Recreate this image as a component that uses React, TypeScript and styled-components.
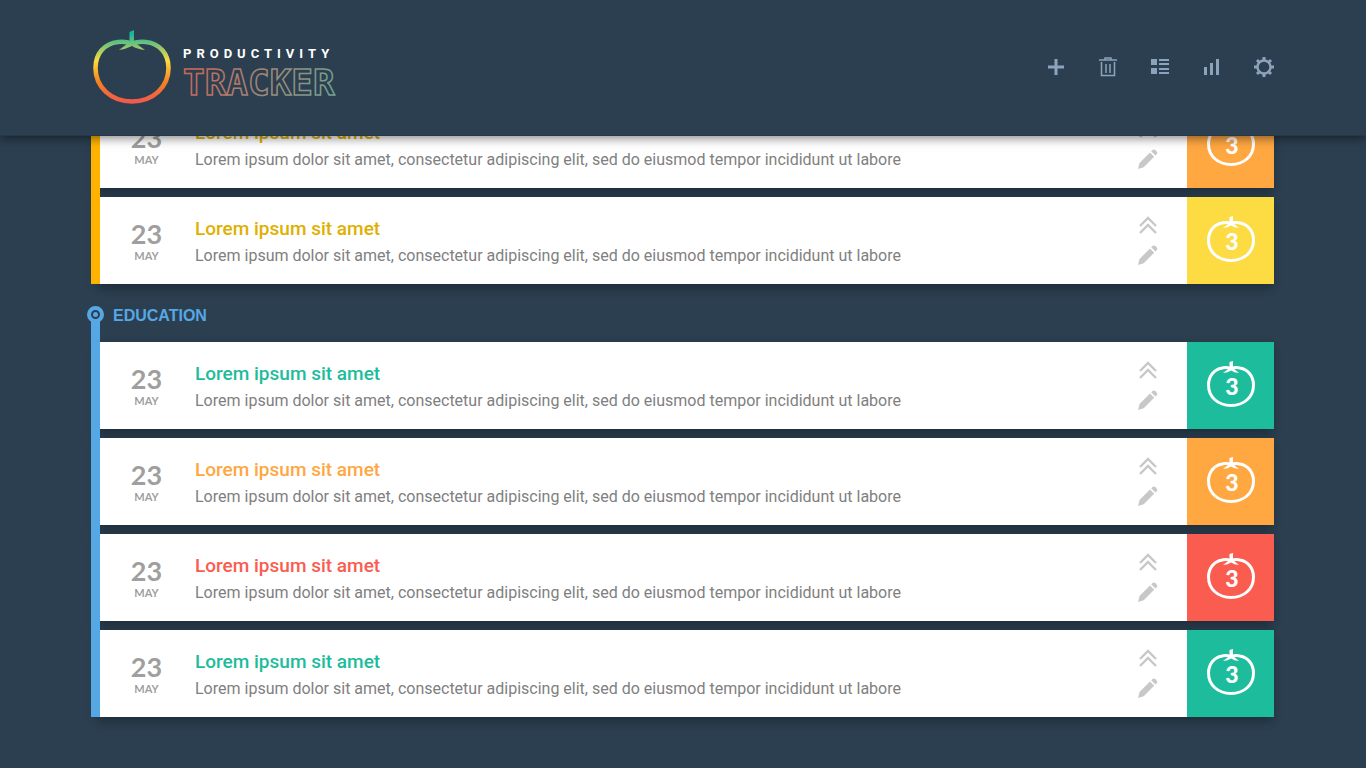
import React from "react";
import styled, { createGlobalStyle } from "styled-components";

const GlobalStyle = createGlobalStyle`
  * { box-sizing: border-box; }
  body {
    margin: 0;
    background: #2b3f50;
    font-family: Roboto, "Noto Sans", sans-serif;
  }
  h1, h2, h3, p, ul { margin: 0; padding: 0; }
`;

const Page = styled.div`
  min-height: 100vh;
  overflow: hidden;
`;

const Header = styled.header`
  position: sticky;
  top: 0;
  z-index: 2;
  display: flex;
  align-items: center;
  justify-content: space-between;
  height: 136px;
  padding: 0 91px 0 92px;
  background: #2b3f50;
  border-bottom: 1px solid #263746;
  box-shadow: 0 2px 10px rgba(0, 0, 0, 0.5);
`;

const Brand = styled.div`
  display: flex;
  align-items: center;
  gap: 11px;
`;

const BrandName = styled.h1`
  display: flex;
  font-size: 14px;
`;

const Toolbar = styled.nav`
  display: flex;
  align-items: center;
  gap: 30px;
  padding-bottom: 2px;
`;

const IconButton = styled.button`
  display: flex;
  align-items: center;
  justify-content: center;
  width: 22px;
  height: 22px;
  padding: 0;
  border: 0;
  background: none;
  color: #8ba4bb;
  cursor: pointer;
`;

const Content = styled.main`
  margin-top: -35px;
  padding: 0 92px 51px 91px;
`;

const Section = styled.section<{ $color: string }>`
  color: ${(p) => p.$color};
`;

const SectionTitle = styled.h2`
  display: flex;
  align-items: center;
  gap: 9px;
  height: 58px;
  padding: 6px 0 0;
  margin-left: -4px;
  font: bold 16px/20px "Liberation Sans", sans-serif;
`;

const Marker = styled.svg`
  display: block;
  align-self: flex-end;
  width: 17px;
  height: 36px;
`;

const SectionBody = styled.div`
  display: flex;
`;

const Rail = styled.div`
  position: relative;
  z-index: 1;
  width: 9px;
  background: currentColor;
`;

const TaskList = styled.ul`
  flex: 1;
  display: flex;
  flex-direction: column;
  gap: 9px;
  list-style: none;
`;

const Card = styled.li`
  display: flex;
  align-items: stretch;
  height: 87px;
  background: #fff;
  box-shadow: -4px 4px 10px rgba(0, 0, 0, 0.16), 0 4px 8px rgba(0, 0, 0, 0.16);
`;

const DateBlock = styled.time`
  width: 91px;
  padding: 21px 0 0 2px;
  text-align: center;
  color: #9f9f9f;
  font-family: Lato, "Noto Sans", sans-serif;
  font-weight: 700;
`;

const Day = styled.div`
  font-size: 27px;
  line-height: 32px;
`;

const Month = styled.div`
  font-size: 11px;
  line-height: 12px;
`;

const TaskText = styled.div`
  flex: 1;
  padding: 20px 0 0 4px;
`;

const TaskTitle = styled.h3<{ $color: string }>`
  color: ${(p) => p.$color};
  font-size: 19px;
  font-weight: 500;
  line-height: 24px;
`;

const TaskNote = styled.p`
  padding-top: 4px;
  color: #808080;
  font-size: 16px;
  line-height: 22px;
`;

const Actions = styled.div`
  display: flex;
  flex-direction: column;
  align-items: center;
  gap: 8px;
  width: 79px;
  padding-top: 17px;
`;

const ActionButton = styled(IconButton)`
  color: #c8c8c8;
`;

const Count = styled.div<{ $color: string }>`
  display: flex;
  align-items: center;
  justify-content: center;
  width: 87px;
  padding-bottom: 2px;
  background: ${(p) => p.$color};
`;

function BrandTomato() {
  return (
    <svg width="80" height="76" viewBox="0 0 80 76" aria-hidden="true">
      <defs>
        <linearGradient id="tomato" x1="0" y1="0" x2="0" y2="76" gradientUnits="userSpaceOnUse">
          <stop offset="0.05" stopColor="#18b59c" />
          <stop offset="0.2" stopColor="#7cc576" />
          <stop offset="0.4" stopColor="#fbdc3f" />
          <stop offset="0.68" stopColor="#f58220" />
          <stop offset="0.95" stopColor="#f1594c" />
        </linearGradient>
      </defs>
      <path
        d="M40 13.500C36 12 31 11.500 26 12C12 13.500 3.500 24 3.500 38C3.500 57 19 71.500 40 71.500C61 71.500 76.500 57 76.500 38C76.500 24 68 13.500 54 12C49 11.500 44 12 40 13.500Z"
        fill="none"
        stroke="url(#tomato)"
        strokeWidth="4.600"
      />
      <path
        d="M37.500 2L42 0V12L53 20Q45 19 40 16Q34 19 27 20L37.500 12Z"
        fill="url(#tomato)"
      />
    </svg>
  );
}

const Wordmark = styled.svg`
  display: block;
  overflow: visible;
`;

function BrandText() {
  return (
    <Wordmark width="154" height="54" viewBox="0 0 154 54">
      <defs>
        <linearGradient id="tracker" x1="0" y1="0" x2="154" y2="54" gradientUnits="userSpaceOnUse">
          <stop offset="0.1" stopColor="#c9675b" />
          <stop offset="0.55" stopColor="#a08877" />
          <stop offset="1" stopColor="#6fa392" />
        </linearGradient>
      </defs>
      <text x="0" y="17" fill="#fff" fontFamily="Roboto" fontWeight="700" fontSize="13" letterSpacing="5">
        PRODUCTIVITY
      </text>
      <text
        x="0"
        y="54"
        fill="none"
        stroke="url(#tracker)"
        strokeWidth="1.500"
        fontFamily="'DejaVu Sans Mono', monospace"
        fontWeight="700"
        fontSize="36"
      >
        TRACKER
      </text>
    </Wordmark>
  );
}

function TomatoCount({ value }: { value: number }) {
  return (
    <svg width="50" height="48" viewBox="0 0 50 48" role="img">
      <path
        d="M25 7.500C22 6.500 19 6.300 16 7C8 8.500 2.500 15 2.500 24C2.500 36 12 44.500 25 44.500C38 44.500 47.500 36 47.500 24C47.500 15 42 8.500 34 7C31 6.300 28 6.500 25 7.500Z"
        fill="none"
        stroke="#fff"
        strokeWidth="3"
      />
      <path d="M23.500 1L27 0V7L33 12Q28 11.500 25 9.500Q22 11.500 17 12L23.500 7Z" fill="#fff" />
      <text x="26" y="34" textAnchor="middle" fill="#fff" fontFamily="Lato" fontWeight="900" fontSize="23">
        {value}
      </text>
    </svg>
  );
}

function PlusIcon() {
  return (
    <svg width="16" height="16" viewBox="0 0 16 16" fill="currentColor">
      <path d="M6.500 0h3v6.500H16v3H9.500V16h-3V9.500H0v-3h6.500z" />
    </svg>
  );
}

function TrashIcon() {
  return (
    <svg width="18" height="20" viewBox="0 0 18 20" fill="none" stroke="currentColor" strokeWidth="1.500">
      <path d="M0 3h18M6 3V1h6v2M2.500 5v13.500h13V5M7 7v9M11 7v9" />
    </svg>
  );
}

function ListIcon() {
  return (
    <svg width="18" height="16" viewBox="0 0 18 16" fill="currentColor">
      <path d="M0 0h6v6H0zM0 9h6v6H0zM8 0h10v2H8zM8 4h10v2H8zM8 9h10v2H8zM8 13h10v2H8z" />
    </svg>
  );
}

function ChartIcon() {
  return (
    <svg width="16" height="16" viewBox="0 0 16 16" fill="currentColor">
      <path d="M0 8h3v8H0zM6 4h3v12H6zM12 0h3v16h-3z" />
    </svg>
  );
}

function GearIcon() {
  return (
    <svg width="20" height="20" viewBox="0 0 20 20" fill="none" stroke="currentColor">
      <circle cx="10" cy="10" r="6.500" strokeWidth="2.400" />
      <path
        d="M10 0v3.500M10 16.500V20M0 10h3.500M16.500 10H20M3 3l2.300 2.300M14.700 14.700L17 17M3 17l2.300-2.300M14.700 5.300L17 3"
        strokeWidth="3"
      />
    </svg>
  );
}

function RaiseIcon() {
  return (
    <svg width="20" height="20" viewBox="0 0 20 20" fill="none" stroke="currentColor" strokeWidth="2.400">
      <path d="M2 11l8-8 8 8M2 18l8-8 8 8" />
    </svg>
  );
}

function PencilIcon() {
  return (
    <svg width="20" height="20" viewBox="0 0 20 20" fill="currentColor">
      <path d="M0 20L1.500 14L12 3.500L16.200 7.700L5.700 18.200ZM13.200 2.300L14.500 1Q16 0 18 1.500Q20 3.500 19 5L17.400 6.500Z" />
    </svg>
  );
}

const tools = [
  { label: "Add task", Icon: PlusIcon },
  { label: "Delete", Icon: TrashIcon },
  { label: "List view", Icon: ListIcon },
  { label: "Statistics", Icon: ChartIcon },
  { label: "Settings", Icon: GearIcon },
];

type Task = { title: string; badge: string };

const GREEN = "#1dbc9c";
const ORANGE = "#ffa741";
const RED = "#fa5c4f";

const earlier: Task[] = [
  { title: "#e0b000", badge: ORANGE },
  { title: "#e0b000", badge: "#fddb43" },
];

const education: Task[] = [GREEN, ORANGE, RED, GREEN].map((c) => ({ title: c, badge: c }));

function TaskCard({ task }: { task: Task }) {
  return (
    <Card>
      <DateBlock dateTime="05-23">
        <Day>23</Day>
        <Month>MAY</Month>
      </DateBlock>
      <TaskText>
        <TaskTitle $color={task.title}>Lorem ipsum sit amet</TaskTitle>
        <TaskNote>
          Lorem ipsum dolor sit amet, consectetur adipiscing elit, sed do eiusmod tempor incididunt ut labore
        </TaskNote>
      </TaskText>
      <Actions>
        <ActionButton aria-label="Raise priority">
          <RaiseIcon />
        </ActionButton>
        <ActionButton aria-label="Edit">
          <PencilIcon />
        </ActionButton>
      </Actions>
      <Count $color={task.badge}>
        <TomatoCount value={3} />
      </Count>
    </Card>
  );
}

function Tasks({ tasks }: { tasks: Task[] }) {
  return (
    <SectionBody>
      <Rail />
      <TaskList>
        {tasks.map((task, i) => (
          <TaskCard key={i} task={task} />
        ))}
      </TaskList>
    </SectionBody>
  );
}

export default function App() {
  return (
    <Page>
      <GlobalStyle />
      <Header>
        <Brand>
          <BrandTomato />
          <BrandName>
            <BrandText />
          </BrandName>
        </Brand>
        <Toolbar>
          {tools.map(({ label, Icon }) => (
            <IconButton key={label} aria-label={label}>
              <Icon />
            </IconButton>
          ))}
        </Toolbar>
      </Header>
      <Content>
        <Section $color="#ffb300">
          <Tasks tasks={earlier} />
        </Section>
        <Section $color="#56a8e4">
          <SectionTitle>
            <Marker viewBox="0 0 17 36" aria-hidden="true">
              <path d="M4 12h9v24H4z" fill="currentColor" />
              <circle cx="8.500" cy="8.500" r="6.500" fill="#2b3f50" stroke="currentColor" strokeWidth="4" />
              <circle cx="8.500" cy="8.500" r="2.500" fill="currentColor" />
            </Marker>
            EDUCATION
          </SectionTitle>
          <Tasks tasks={education} />
        </Section>
      </Content>
    </Page>
  );
}
